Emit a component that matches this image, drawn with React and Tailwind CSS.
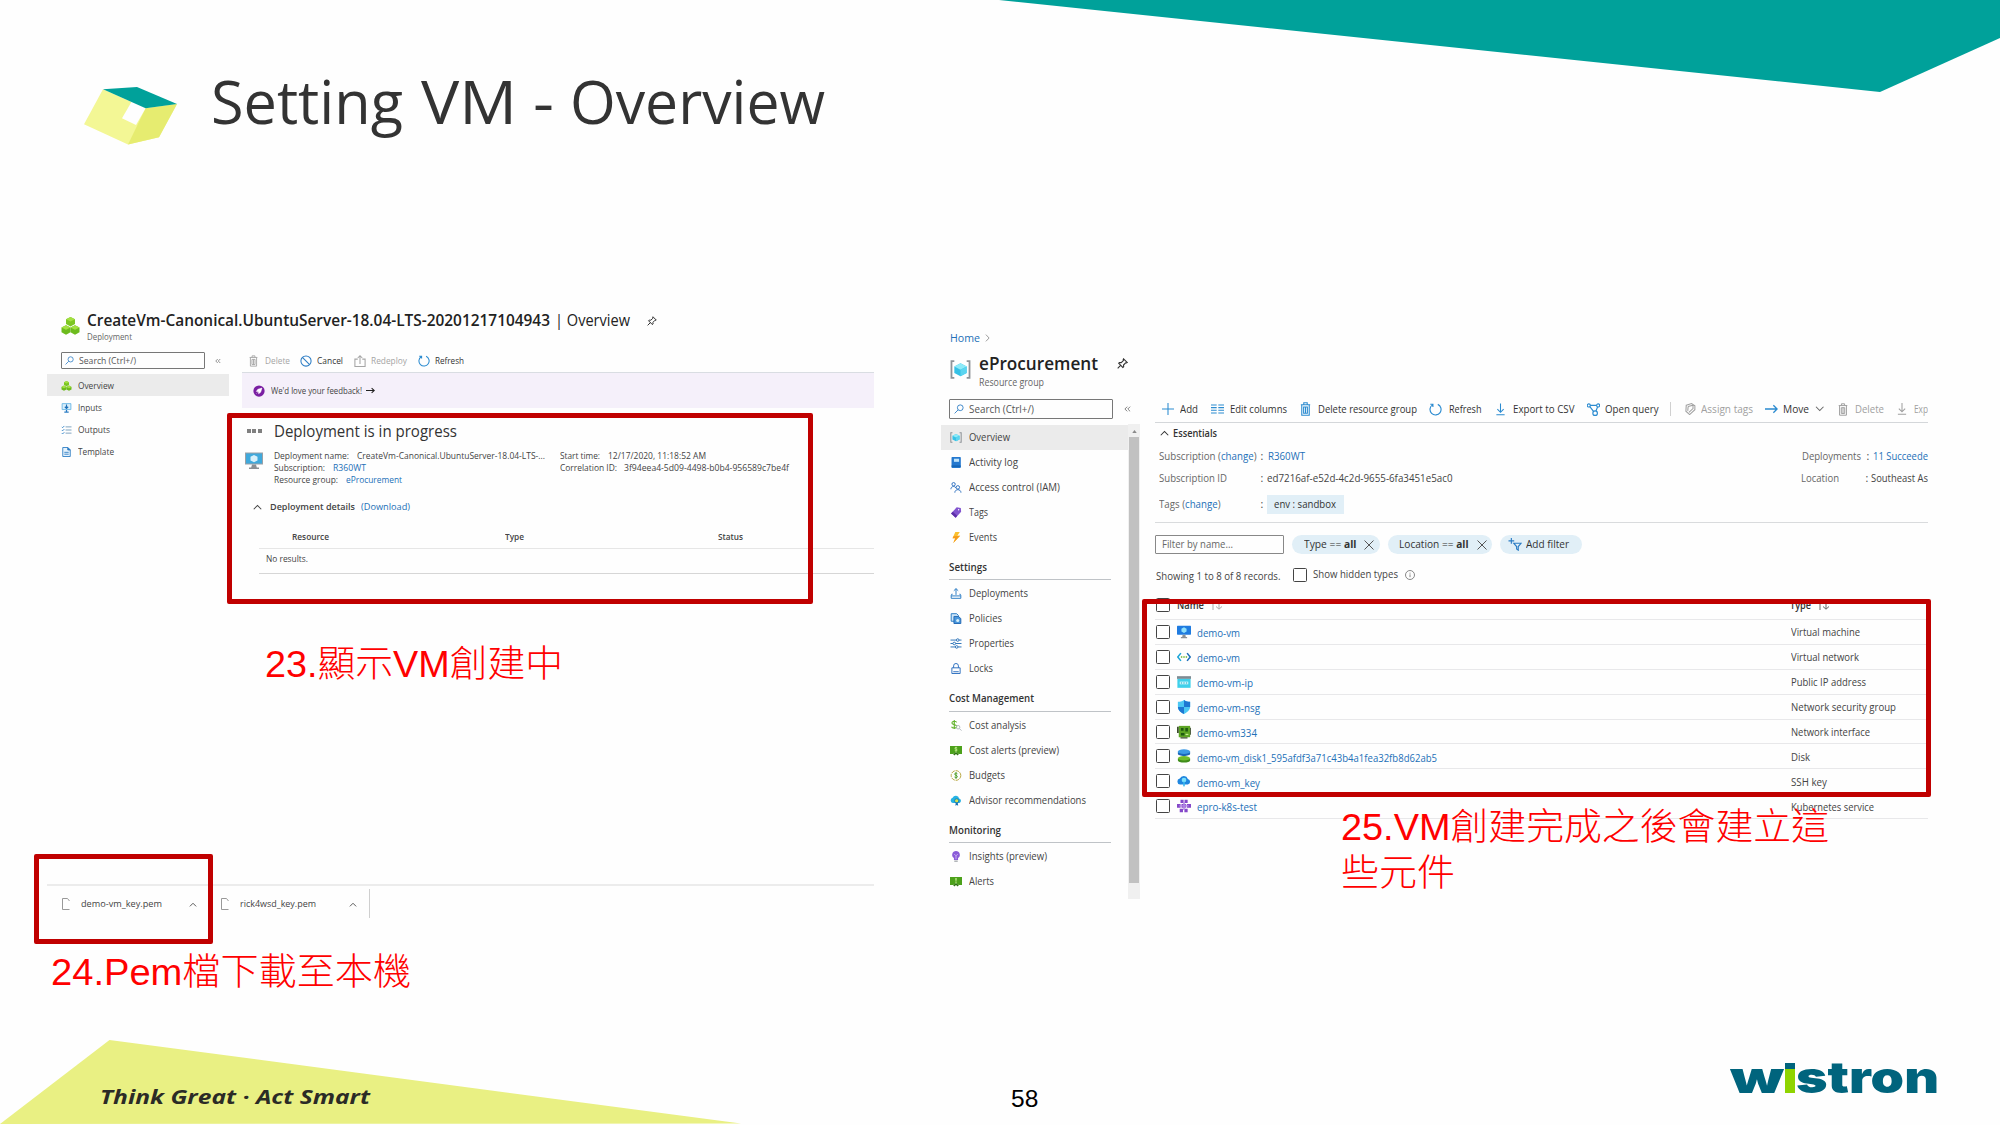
import { useLayoutEffect, useRef } from "react";

/* Text squeezed or stretched horizontally to the width its box is given. */
function Fit({ className = "", children }) {
  const box = useRef(null);
  const inner = useRef(null);
  useLayoutEffect(() => {
    const run = () => {
      if (!box.current || !inner.current) return;
      inner.current.style.transform = "none";
      const w = inner.current.getBoundingClientRect().width;
      const target = box.current.getBoundingClientRect().width;
      if (w > 0) inner.current.style.transform = `scaleX(${target / w})`;
    };
    run();
    document.fonts.ready.then(run);
  }, []);
  return (
    <span ref={box} className={`inline-block shrink-0 whitespace-nowrap ${className}`}>
      <span ref={inner} className="inline-block origin-left">
        {children}
      </span>
    </span>
  );
}

function Svg({ className = "", vb = "0 0 16 16", children }) {
  return (
    <svg viewBox={vb} className={`shrink-0 ${className}`} fill="none" stroke="currentColor" strokeWidth="1.4">
      {children}
    </svg>
  );
}

/* ---------- line icons ---------- */
const Search = ({ className }) => (
  <Svg className={`text-[#2b7cc4] ${className}`}>
    <circle cx="10" cy="6" r="4.6" />
    <path d="M6.6 9.4 1 15" />
  </Svg>
);
const Trash = ({ className }) => (
  <Svg className={className} vb="0 0 14 18">
    <path d="M1 3.5h12M4.8 3.2V1h4.4v2.2M2.2 3.8V17h9.6V3.8" />
    <path d="M4.6 6.5v8h4.8v-8zM7 6.5v8" />
  </Svg>
);
const Cancel = ({ className }) => (
  <Svg className={className}>
    <circle cx="8" cy="8" r="6.8" />
    <path d="M3.2 3.2l9.6 9.6" />
  </Svg>
);
const Redeploy = ({ className }) => (
  <Svg className={className}>
    <path d="M5 5.5H1.2v9.8h13.6V5.5H11M8 12V1M5 4l3-3 3 3" />
  </Svg>
);
const RefreshIcon = ({ className }) => (
  <Svg className={className}>
    <path d="M10.8 1.7a6.8 6.8 0 1 1-6.6.6M1.6 1.6h3.2v3.2" />
  </Svg>
);
const Chevron = ({ className }) => (
  <Svg className={className} vb="0 0 12 8">
    <path d="M1 7l5-5 5 5" />
  </Svg>
);
const Pin = ({ className }) => (
  <Svg className={className}>
    <path d="M9.5 1.2l5.3 5.3-1.3.7-1-.2-3 3.2.2 2.6-1.2.9-6-6 1-1.2 2.6.2 3.2-3-.3-1.2zM5.5 10.5L1 15" strokeWidth="1.6" />
  </Svg>
);
const Download = ({ className }) => (
  <Svg className={className} vb="0 0 12 16">
    <path d="M6 0v11.5M1.8 7.6L6 11.8l4.2-4.2M.5 15h11" />
  </Svg>
);
const Laquo = ({ className }) => (
  <Svg className={`text-[#666] ${className}`} vb="0 0 12 10">
    <path d="M5.5 1l-4 4 4 4M10.5 1l-4 4 4 4" />
  </Svg>
);

/* ---------- coloured icons ---------- */
const Cubes = ({ className }) => (
  <Svg className={className} vb="0 0 20 20">
    <g stroke="none">
      <path d="M10 0l5 2.6v5.2L10 10.500 5 7.800V2.600z" fill="#7cc623" />
      <path d="M5 9.200l5 2.600V17l-5 2.700L0 17v-5.200z" fill="#6dbb1d" />
      <path d="M15 9.200l5 2.600V17l-5 2.700L10 17v-5.200z" fill="#6dbb1d" />
      <path d="M10 0l5 2.600-5 2.500-5-2.500zM5 9.200l5 2.600-5 2.500-5-2.500zM15 9.200l5 2.600-5 2.500-5-2.500z" fill="#a4e043" />
    </g>
  </Svg>
);
const Monitor = ({ className }) => (
  <Svg className={className} vb="0 0 18 17">
    <g stroke="none">
      <path d="M0 0h18v12H0z" fill="#9aa0a6" />
      <path d="M1 1h16v10H1z" fill="#3fa9dc" />
      <path d="M9 2.500l3.500 1.800v3.600L9 9.800 5.500 7.900V4.300z" fill="#d8f0fa" />
      <path d="M7 12h4l.8 3H14v1.600H4V15h2.200z" fill="#8a8f94" />
    </g>
  </Svg>
);
const VmIcon = ({ className }) => (
  <Svg className={className} vb="0 0 18 16">
    <g stroke="none">
      <rect width="18" height="11.500" rx=".8" fill="#1f7be0" />
      <path d="M9 2l3.300 1.800v3.700L9 9.400 5.700 7.500V3.800z" fill="#8fe0fb" />
      <path d="M7.200 11.500h3.600l.5 3H13V16H5v-1.500h1.700z" fill="#8b9096" />
    </g>
  </Svg>
);
const InputsIcon = ({ className }) => (
  <Svg className={className}>
    <path d="M1 1h14v9.500H1z" stroke="#66b5e4" fill="#d9eefa" />
    <path d="M8 2.500v6M5.300 6L8 8.700 10.700 6" stroke="#1b6fb8" strokeWidth="1.800" />
    <path d="M4.500 14.500h7M8 11v3" stroke="#2b7cc4" strokeWidth="2" />
  </Svg>
);
const OutputsIcon = ({ className }) => (
  <Svg className={className}>
    <path d="M6.500 3H16M6.500 8H16M6.500 13H16" stroke="#6f98b8" />
    <path d="M.5 3l1.300 1.300L4.500 1.500M.5 8l1.300 1.300L4.500 6.500M.5 13l1.300 1.300 2.700-2.800" stroke="#2f82c8" />
  </Svg>
);
const TemplateIcon = ({ className }) => (
  <Svg className={className}>
    <path d="M2 .8h8l4 4v10.400H2z" stroke="#2b7cc4" fill="#e7f3fc" />
    <path d="M10 .8v4h4z" fill="#2b7cc4" stroke="#2b7cc4" />
    <path d="M4.500 8.500h7M4.500 11.500h7" stroke="#2b7cc4" />
  </Svg>
);
const GroupIcon = ({ className }) => (
  <Svg className={className} vb="0 0 22 20">
    <path d="M4.500 1.200H1.500v17.600h3M17.500 1.200h3v17.600h-3" stroke="#8f9499" strokeWidth="1.900" />
    <g stroke="none">
      <path d="M11 3.500l6.500 3.300v6.800L11 17l-6.500-3.400V6.800z" fill="#35c1e6" />
      <path d="M11 3.500l6.500 3.300L11 10.200 4.500 6.800z" fill="#8deaf8" />
      <path d="M11 10.200l6.500-3.400v6.800L11 17z" fill="#5bd5f0" />
    </g>
  </Svg>
);
const LogIcon = ({ className }) => (
  <Svg className={className}>
    <g stroke="none">
      <rect x="1.500" width="13.500" height="16" rx="1" fill="#2478cf" />
      <rect x="5" y="2.500" width="7.500" height="4.500" fill="#bfe3fa" />
      <path d="M1.500 12.500H15V14H1.500z" fill="#0e5ba6" />
    </g>
  </Svg>
);
const IamIcon = ({ className }) => (
  <Svg className={`text-[#2d6fc0] ${className}`}>
    <circle cx="4.500" cy="3.200" r="2.400" />
    <path d="M.6 10.500c0-5 6.500-5 7.200-1.500" />
    <circle cx="10.700" cy="7.800" r="2.500" />
    <path d="M6.300 15.500c0-5.800 8.900-5.800 8.900 0" />
  </Svg>
);
const TagIcon = ({ className }) => (
  <Svg className={className}>
    <path d="M9 .5l6 1 .5 5.500-8 8.500L.8 9.500z" fill="#8254cf" stroke="none" />
    <path d="M.8 9.500l6.700 6 2.200-2.900-6.400-5.600z" fill="#5d2fa8" stroke="none" />
    <circle cx="11.800" cy="4" r="1" fill="#fff" stroke="none" />
  </Svg>
);
const EventsIcon = ({ className }) => (
  <Svg className={className}>
    <path d="M7 0h6.500L10 5.500h4L4 16l3-7H3z" fill="#fbc02d" stroke="none" />
    <path d="M4 16l3-7H3l1.300-3L14 5.500z" fill="#f59b1c" stroke="none" />
  </Svg>
);
const DeployIcon = ({ className }) => (
  <Svg className={`text-[#2b7cc4] ${className}`}>
    <path d="M3 9H1.800L1 11v4h14v-4l-.8-2H13M1 11.500h14M8 10V1M4.800 4L8 .9 11.200 4" />
  </Svg>
);
const PolicyIcon = ({ className }) => (
  <Svg className={className}>
    <path d="M1 1h8l2.500 2.500V12H1z" stroke="#2b7cc4" fill="#cfe6f8" />
    <path d="M5 5h6.500L15 8v7.300H5z" fill="#4a97dc" stroke="#2168b4" />
    <circle cx="10.500" cy="11" r="2.200" fill="#d8f0fa" stroke="none" />
  </Svg>
);
const PropsIcon = ({ className }) => (
  <Svg className={`text-[#2d74b8] ${className}`}>
    <path d="M0 3h8.500M12.500 3H16M0 8h3.500M7.500 8H16M0 13h7M11 13h5" />
    <circle cx="10.500" cy="3" r="1.900" />
    <circle cx="5.500" cy="8" r="1.900" />
    <circle cx="9" cy="13" r="1.900" />
  </Svg>
);
const LockIcon = ({ className }) => (
  <Svg className={`text-[#2d6fc0] ${className}`}>
    <path d="M2 7h12v8.300H2zM4.500 7V4.200a3.500 3.500 0 0 1 7 0V7M4 12.700h8" />
  </Svg>
);
const Bill = ({ className }) => (
  <Svg className={className} vb="0 0 17 14">
    <path d="M0 .5h17V12h-4.500L8.500 9.500 4.500 12H0z" fill="#4ca11b" stroke="none" />
    <path d="M8.500 9.500L4.500 12 6 14l2.500-2L11 14l1.500-2z" fill="#2f7410" stroke="none" />
    <path d="M10.200 3.300c-1-1.100-3.300-.9-3.300.5s3.300 1 3.300 2.500-2.500 1.500-3.500.5M8.500 1.800v6.800" stroke="#c5ef8f" strokeWidth="1.200" />
  </Svg>
);
const AlertBill = ({ className }) => (
  <Svg className={className} vb="0 0 17 14">
    <path d="M0 .5h17V12h-4.500L8.500 9.500 4.500 12H0z" fill="#4ca11b" stroke="none" />
    <path d="M8.500 9.500L4.500 12 6 14l2.500-2L11 14l1.500-2z" fill="#2f7410" stroke="none" />
    <path d="M8.500 2v4M8.500 7v1.600" stroke="#c5ef8f" strokeWidth="1.800" />
  </Svg>
);
const CostIcon = ({ className }) => (
  <Svg className={className}>
    <path d="M9 3.500C8 1 2 1.300 2 4.400 2 7.500 9 6 9 9.400c0 3.200-6.500 3-7.500.4M5.500 0v13" stroke="#63b32e" strokeWidth="1.600" />
    <circle cx="11" cy="10.500" r="2.600" stroke="#b2b8bd" />
    <path d="M13 12.500l3 3" stroke="#b2b8bd" />
  </Svg>
);
const BudgetIcon = ({ className }) => (
  <Svg className={className}>
    <circle cx="8" cy="8" r="7" stroke="#b6a33a" strokeDasharray="5 1.300" />
    <path d="M10 5.400C9 4 6 4.200 6 6s4 1.600 4 3.700c0 2-3.300 2.100-4.200.5M8 3.300v9.400" stroke="#4b9a22" />
  </Svg>
);
const AdvisorIcon = ({ className }) => (
  <Svg className={className} vb="0 0 17 15">
    <path d="M4 11a3.800 3.800 0 0 1-.3-7.400 5 5 0 0 1 9.300 1A3.400 3.400 0 0 1 13.500 11z" fill="#26b3e4" stroke="none" />
    <circle cx="9.500" cy="8" r="3" fill="#d7e34b" stroke="#1681b8" />
    <path d="M8.200 10.500L7.600 15l2-1.200 2 1.200-.7-4.500z" fill="#1672b5" stroke="none" />
  </Svg>
);
const InsightIcon = ({ className }) => (
  <Svg className={className}>
    <path d="M8 0a5.600 5.600 0 0 1 3 10.300V13H5v-2.700A5.600 5.600 0 0 1 8 0z" fill="#8a5bd8" stroke="none" />
    <path d="M5.500 4.500L8 7l2.500-2.500M8 7v5" stroke="#dccbf7" strokeWidth="1.100" />
    <path d="M5.500 14h5v1.500h-5z" fill="#8b9096" stroke="none" />
  </Svg>
);
const VnetIcon = ({ className }) => (
  <Svg className={className} vb="0 0 18 12">
    <path d="M5 1L1 6l4 5" stroke="#1da6d8" strokeWidth="2" />
    <path d="M13 1l4 5-4 5" stroke="#1f6fb9" strokeWidth="2" />
    <path d="M5 6h1.800M8.100 6h1.800M11.200 6H13" stroke="#6cb52d" strokeWidth="1.900" />
  </Svg>
);
const IpIcon = ({ className }) => (
  <Svg className={className} vb="0 0 18 15">
    <path d="M0 0h18v3.500H0z" fill="#7f8b93" stroke="none" />
    <path d="M.5 3.500h17V15H.5z" fill="#3fd0ea" stroke="none" />
    <path d="M3.500 7h11v3.500h-11z" fill="#c9f5fb" stroke="none" />
    <path d="M5 8.800h1.500M8.200 8.800h1.600M11.500 8.800H13" stroke="#1b9fc0" />
  </Svg>
);
const NsgIcon = ({ className }) => (
  <Svg className={className}>
    <path d="M8 0c2.500 1.700 4.500 2 7 2v5.500C15 12 11 14.700 8 16 5 14.700 1 12 1 7.500V2c2.500 0 4.500-.3 7-2z" fill="#4cc8f4" stroke="none" />
    <path d="M8 0c2.500 1.700 4.500 2 7 2v6H8zM8 8v8C5 14.700 1.200 12 1 8z" fill="#1d78d2" stroke="none" />
  </Svg>
);
const NicIcon = ({ className }) => (
  <Svg className={className}>
    <path d="M2 1h13v13H2z" fill="#5da524" stroke="none" />
    <path d="M0 2h2v7H0zM15 3h1v8h-1zM4 14h8v1.500H4z" fill="#3c4c2c" stroke="none" />
    <path d="M4.500 3.500h3v3h-3zM9.500 3.500h3v4h-3zM4.500 9h4v3h-4z" fill="#1f5a12" stroke="none" />
    <path d="M9.800 10.800h3.200" stroke="#c5ef8f" />
  </Svg>
);
const DiskIcon = ({ className }) => (
  <Svg className={className}>
    <path d="M1 3v2.500c0 3.300 14 3.300 14 0V3z" fill="#1b66b7" stroke="none" />
    <ellipse cx="8" cy="3" rx="7" ry="2.800" fill="#3d9be6" stroke="none" />
    <path d="M1 10.800v2c0 3.600 14 3.600 14 0v-2z" fill="#3f8d1a" stroke="none" />
    <ellipse cx="8" cy="10.600" rx="7" ry="2.500" fill="#72bd2c" stroke="none" />
  </Svg>
);
const KeyIcon = ({ className }) => (
  <Svg className={className} vb="0 0 18 15">
    <path d="M4 12a3.900 3.900 0 0 1-.4-7.700A5.600 5.600 0 0 1 14 4.800 3.700 3.700 0 0 1 14 12z" fill="#1f86df" stroke="none" />
    <circle cx="9" cy="6.300" r="3" fill="#7be0fb" stroke="none" />
    <path d="M8 8.500h2V14l-1 1-1-1z" fill="#35b7ee" stroke="none" />
  </Svg>
);
const K8sIcon = ({ className }) => (
  <Svg className={className} vb="0 0 18 16">
    <g fill="#8548c9" stroke="none">
      <path d="M4.500 0h4v4h-4zM9.700 0h4v4h-4zM0 5.500h4.600v4.600H0zM5.800 5.500h5.600v4.600H5.800zM12.600 5.500H18v4.600h-5.400zM3.500 11.500h4.200V16H3.500zM9.500 11.500h4.200V16H9.500z" />
      <path d="M3 7h12v1.500H3zM8 3h2v10H8z" fill="#b389e6" />
    </g>
  </Svg>
);

function LeftNavItem({ icon: Icon, label, w, active }) {
  return (
    <div className={`flex h-[22px] items-center pt-px pl-[14px] ${active ? "bg-[#ebebeb]" : ""}`}>
      <Icon className="h-[10px] w-[11px]" />
      <Fit className={`ml-[6px] ${w}`}>{label}</Fit>
    </div>
  );
}

function FileIcon({ className = "" }) {
  return (
    <Svg className={`mt-[2px] h-[12px] w-[8px] text-[#999] ${className}`} vb="0 0 8 12">
      <path d="M7.500 11.500H.5V.5h5l2 2.500" strokeWidth="1" />
    </Svg>
  );
}

function Deployment() {
  return (
    <section className="ml-[47px] flex h-[620px] w-[827px] shrink-0 flex-col text-[9.500px] leading-none text-[#444]">
      <div className="flex h-[44px] items-start">
        <Cubes className="mt-[17px] ml-[14px] h-[18px] w-[19px]" />
        <div className="ml-[7px]">
          <div className="mt-[11px] flex h-[19px] items-center text-[15.500px] text-[#222]">
            <Fit className="w-[463px] font-semibold">CreateVm-Canonical.UbuntuServer-18.04-LTS-20201217104943</Fit>
            <Fit className="ml-[5px] w-[75px]">| Overview</Fit>
            <Pin className="ml-[17px] h-[10px] w-[10px] text-[#333]" />
          </div>
          <div className="flex h-[13px] items-center text-[9px] text-[#666]">
            <Fit className="w-[45px]">Deployment</Fit>
          </div>
        </div>
      </div>

      <div className="flex">
        <nav className="w-[182px] shrink-0">
          <div className="mt-[8px] flex h-[17px] items-center">
            <div className="ml-[13.500px] flex h-[17px] w-[144px] items-center rounded-[1px] border border-[#777] pl-[3px]">
              <Search className="h-[9px] w-[9px]" />
              <Fit className="ml-[5px] w-[57px] text-[#555]">Search (Ctrl+/)</Fit>
            </div>
            <Laquo className="ml-[10px] h-[6px] w-[6px]" />
          </div>
          <div className="mt-[5px]">
            <LeftNavItem icon={Cubes} label="Overview" w="w-[36px]" active />
            <LeftNavItem icon={InputsIcon} label="Inputs" w="w-[24px]" />
            <LeftNavItem icon={OutputsIcon} label="Outputs" w="w-[32px]" />
            <LeftNavItem icon={TemplateIcon} label="Template" w="w-[36px]" />
          </div>
        </nav>

        <div className="ml-[13px] w-[632px] shrink-0">
          <div className="flex h-[29px] items-center border-b border-[#d9dde2] pt-[5px] pl-[7px] text-[#333]">
            <Trash className="h-[12px] w-[9px] text-[#a5a5a5]" />
            <Fit className="ml-[7px] w-[25px] text-[#a5a5a5]">Delete</Fit>
            <Cancel className="ml-[10px] h-[12px] w-[12px] text-[#2b7cc4]" />
            <Fit className="ml-[5px] w-[26px]">Cancel</Fit>
            <Redeploy className="ml-[11px] h-[12px] w-[12px] text-[#a5a5a5]" />
            <Fit className="ml-[5px] w-[36px] text-[#a5a5a5]">Redeploy</Fit>
            <RefreshIcon className="ml-[11px] h-[12px] w-[12px] text-[#2b8bd0]" />
            <Fit className="ml-[5px] w-[29px]">Refresh</Fit>
          </div>
          <div className="flex h-[35px] items-center bg-[#f5f0fa] pl-[11px]">
            <Svg className="h-[12px] w-[12px]">
              <circle cx="8" cy="8" r="7.500" fill="#7a1fa2" stroke="none" />
              <path d="M11.800 4.200L6.500 5.800 4.500 8.500l3 0M11.800 4.200L10.200 9.500 7.500 11.500v-3zM6 10l-1.300 1.300" fill="#fff" stroke="#fff" strokeWidth=".8" />
            </Svg>
            <Fit className="ml-[6px] w-[91px]">We'd love your feedback!</Fit>
            <Svg className="ml-[4px] h-[7px] w-[9px] text-[#222]" vb="0 0 12 8">
              <path d="M0 4h11M7.500.8L11 4 7.500 7.200" />
            </Svg>
          </div>

          <div className="mt-[11px] flex h-[24px] items-center">
            <div className="ml-[4.500px] flex w-[15.500px] justify-between">
              <span className="h-[4px] w-[4px] bg-[#808080]" />
              <span className="h-[4px] w-[4px] bg-[#808080]" />
              <span className="h-[4px] w-[4px] bg-[#808080]" />
            </div>
            <Fit className="ml-[12px] w-[183px] text-[16.500px] text-[#333]">Deployment is in progress</Fit>
          </div>

          <div className="mt-[7px] flex h-[36px]">
            <Monitor className="mt-[2px] ml-[3px] h-[18px] w-[18px]" />
            <div className="ml-[11px] w-[286px]">
              <div className="flex h-[11.700px] items-center">
                <Fit className="w-[75px]">Deployment name:</Fit>
                <Fit className="ml-[8px] w-[188px]">CreateVm-Canonical.UbuntuServer-18.04-LTS-...</Fit>
              </div>
              <div className="flex h-[11.700px] items-center">
                <Fit className="w-[51px]">Subscription:</Fit>
                <Fit className="ml-[8px] w-[33px] text-[#2370b8]">R360WT</Fit>
              </div>
              <div className="flex h-[12.400px] items-center">
                <Fit className="w-[64px]">Resource group:</Fit>
                <Fit className="ml-[8px] w-[56px] text-[#2370b8]">eProcurement</Fit>
              </div>
            </div>
            <div>
              <div className="flex h-[11.700px] items-center">
                <Fit className="w-[40px]">Start time:</Fit>
                <Fit className="ml-[8px] w-[98px]">12/17/2020, 11:18:52 AM</Fit>
              </div>
              <div className="flex h-[11.700px] items-center">
                <Fit className="w-[57px]">Correlation ID:</Fit>
                <Fit className="ml-[7px] w-[165px]">3f94eea4-5d09-4498-b0b4-956589c7be4f</Fit>
              </div>
            </div>
          </div>

          <div className="mt-[11px] flex h-[20px] items-center">
            <Chevron className="ml-[11px] h-[6px] w-[9px] text-[#444]" />
            <Fit className="ml-[8px] w-[85px] font-semibold">Deployment details</Fit>
            <Fit className="ml-[5.500px] w-[49px] text-[#2370b8]">(Download)</Fit>
          </div>

          <div className="ml-[17px]">
            <div className="mt-[10px] grid h-[22px] grid-cols-[213px_212.500px_1fr] items-center border-b border-[#e6e6e6] pb-px pl-[33px] font-semibold">
              <Fit className="w-[37px]">Resource</Fit>
              <Fit className="w-[19px]">Type</Fit>
              <Fit className="w-[25px]">Status</Fit>
            </div>
            <div className="flex h-[25px] items-start border-b border-[#d6d6d6] pt-[5px] pl-[7px]">
              <Fit className="w-[42px]">No results.</Fit>
            </div>
          </div>
        </div>
      </div>

      <div className="mt-auto flex h-[36px] items-center border-t-2 border-[#ececec]">
        <FileIcon className="ml-[15px]" />
        <Fit className="mt-[2px] ml-[11px] w-[81px]">demo-vm_key.pem</Fit>
        <Chevron className="mt-[2px] ml-[27px] h-[5px] w-[8px]" />
        <FileIcon className="ml-[24px]" />
        <Fit className="mt-[2px] ml-[11px] w-[76px]">rick4wsd_key.pem</Fit>
        <Chevron className="mt-[2px] ml-[33px] h-[5px] w-[8px]" />
        <span className="ml-[12px] h-[29px] w-px bg-[#cfcfcf]" />
      </div>
    </section>
  );
}

function NavItem({ icon: Icon, label, w, active }) {
  return (
    <div className={`flex h-[25px] items-center pl-[9px] ${active ? "bg-[#ebebeb]" : ""}`}>
      <Icon className="h-[11px] w-[12px]" />
      <Fit className={`ml-[7px] ${w}`}>{label}</Fit>
    </div>
  );
}

function NavHeading({ label, w, h }) {
  return (
    <div className={`mb-px ml-[8px] flex w-[162px] items-center border-b border-[#bfc3c7] pt-[5px] font-semibold text-[#333] ${h}`}>
      <Fit className={w}>{label}</Fit>
    </div>
  );
}

function Check({ className = "" }) {
  return <span className={`h-[14px] w-[14px] shrink-0 rounded-[1.500px] border border-[#444] bg-white ${className}`} />;
}

function Sort({ className = "" }) {
  return (
    <Svg className={`h-[9px] w-[13px] ${className}`} vb="0 0 13 9">
      <path d="M3 9V1M.8 3L3 .8 5.200 3M9 0v8M6 5.500L9 8.200l3-2.700" strokeWidth="1" />
    </Svg>
  );
}

const Cross = ({ className }) => (
  <Svg className={`h-[10px] w-[10px] text-[#555] ${className}`} vb="0 0 10 10">
    <path d="M.5.5l9 9M9.500.5l-9 9" strokeWidth="1" />
  </Svg>
);

const ROWS = [
  { icon: VmIcon, name: "demo-vm", w: "w-[43px]", type: "Virtual machine", tw: "w-[69px]" },
  { icon: VnetIcon, name: "demo-vm", w: "w-[43px]", type: "Virtual network", tw: "w-[68px]" },
  { icon: IpIcon, name: "demo-vm-ip", w: "w-[56px]", type: "Public IP address", tw: "w-[75px]" },
  { icon: NsgIcon, name: "demo-vm-nsg", w: "w-[63px]", type: "Network security group", tw: "w-[105px]" },
  { icon: NicIcon, name: "demo-vm334", w: "w-[60px]", type: "Network interface", tw: "w-[79px]" },
  { icon: DiskIcon, name: "demo-vm_disk1_595afdf3a71c43b4a1fea32fb8d62ab5", w: "w-[240px]", type: "Disk", tw: "w-[19px]" },
  { icon: KeyIcon, name: "demo-vm_key", w: "w-[63px]", type: "SSH key", tw: "w-[36px]" },
  { icon: K8sIcon, name: "epro-k8s-test", w: "w-[60px]", type: "Kubernetes service", tw: "w-[83px]" },
];

function ResourceGroup() {
  const blue = "text-[#2b8bd0]";
  return (
    <section className="ml-[67px] h-[599px] w-[987px] shrink-0 overflow-hidden text-[10.500px] leading-none text-[#444]">
      <div className="mt-[30px] flex h-[16px] items-center pl-[8.500px]">
        <Fit className="w-[30px] text-[#2370b8]">Home</Fit>
        <Svg className="ml-[5px] h-[8px] w-[5px] text-[#999]" vb="0 0 6 10">
          <path d="M1 .8L5 5 1 9.200" strokeWidth="1.200" />
        </Svg>
      </div>
      <div className="flex h-[43px] items-start pt-[5px] pl-[9px]">
        <GroupIcon className="mt-[9px] h-[19px] w-[21px]" />
        <div className="ml-[8px]">
          <div className="flex h-[24px] items-center">
            <Fit className="w-[119px] text-[18.500px] font-semibold text-[#222]">eProcurement</Fit>
            <Pin className="ml-[19px] h-[11px] w-[11px] text-[#333]" />
          </div>
          <div className="flex h-[13px] items-center text-[10px] text-[#666]">
            <Fit className="w-[65px]">Resource group</Fit>
          </div>
        </div>
      </div>

      <div className="flex">
        <nav className="w-[199px] shrink-0">
          <div className="mt-[10px] flex h-[20px] items-center">
            <div className="ml-[8px] flex h-[20px] w-[164px] items-center rounded-[1px] border border-[#777] pl-[4px]">
              <Search className="h-[10px] w-[10px]" />
              <Fit className="ml-[5px] w-[65px] text-[#555]">Search (Ctrl+/)</Fit>
            </div>
            <Laquo className="ml-[11px] h-[6px] w-[7px]" />
          </div>
          <div className="mt-[5px] flex h-[475px]">
            <div className="w-[187px]">
              <div className="pt-[0.600px]">
                <NavItem icon={GroupIcon} label="Overview" w="w-[41px]" active />
                <NavItem icon={LogIcon} label="Activity log" w="w-[49px]" />
                <NavItem icon={IamIcon} label="Access control (IAM)" w="w-[91px]" />
                <NavItem icon={TagIcon} label="Tags" w="w-[19px]" />
                <NavItem icon={EventsIcon} label="Events" w="w-[28px]" />
              </div>
              <NavHeading label="Settings" w="w-[38px]" h="h-[30.500px]" />
              <NavItem icon={DeployIcon} label="Deployments" w="w-[59px]" />
              <NavItem icon={PolicyIcon} label="Policies" w="w-[33px]" />
              <NavItem icon={PropsIcon} label="Properties" w="w-[45px]" />
              <NavItem icon={LockIcon} label="Locks" w="w-[24px]" />
              <NavHeading label="Cost Management" w="w-[85px]" h="h-[30.500px]" />
              <NavItem icon={CostIcon} label="Cost analysis" w="w-[57px]" />
              <NavItem icon={Bill} label="Cost alerts (preview)" w="w-[90px]" />
              <NavItem icon={BudgetIcon} label="Budgets" w="w-[36px]" />
              <NavItem icon={AdvisorIcon} label="Advisor recommendations" w="w-[117px]" />
              <NavHeading label="Monitoring" w="w-[52px]" h="h-[30.500px]" />
              <NavItem icon={InsightIcon} label="Insights (preview)" w="w-[78px]" />
              <NavItem icon={AlertBill} label="Alerts" w="w-[25px]" />
            </div>
            <div className="flex w-[12px] flex-col items-center bg-[#f0f0f0]">
              <Svg className="mt-[6px] h-[3px] w-[5px]" vb="0 0 6 4">
                <path d="M3 0l3 4H0z" fill="#8a8a8a" stroke="none" />
              </Svg>
              <span className="mt-[4px] h-[446px] w-[10px] bg-[#c1c1c1]" />
            </div>
          </div>
        </nav>

        <div className="ml-[15px] w-[773px] shrink-0 overflow-hidden">
          <div className="flex h-[34px] items-center border-b border-[#d4d7da] pt-[7px] pl-[7px] text-[#333]">
            <Svg className={`h-[12px] w-[12px] ${blue}`}>
              <path d="M8 0v16M0 8h16" />
            </Svg>
            <Fit className="ml-[6px] w-[18px]">Add</Fit>
            <Svg className={`ml-[13px] h-[10px] w-[13px] ${blue}`} vb="0 0 16 12">
              <path d="M0 1h7M9 1h7M0 4.300h7M9 4.300h7M0 7.600h7M9 7.600h7M0 11h7M9 11h7" strokeWidth="1.300" />
            </Svg>
            <Fit className="ml-[6px] w-[57px]">Edit columns</Fit>
            <Trash className={`ml-[13px] h-[14px] w-[11px] ${blue}`} />
            <Fit className="ml-[7px] w-[99px]">Delete resource group</Fit>
            <RefreshIcon className={`ml-[12px] h-[13px] w-[13px] ${blue}`} />
            <Fit className="ml-[6.500px] w-[32.500px]">Refresh</Fit>
            <Download className={`ml-[15px] h-[13px] w-[9px] ${blue}`} />
            <Fit className="ml-[7.500px] w-[61.500px]">Export to CSV</Fit>
            <Svg className={`ml-[12.500px] h-[13px] w-[13px] ${blue}`}>
              <circle cx="2.200" cy="3" r="1.900" />
              <circle cx="13.700" cy="3" r="1.900" />
              <circle cx="10" cy="12.500" r="2.800" />
              <path d="M4 3h7.700M13 5l-2 4.800M3.500 4.500L8 10.300" />
            </Svg>
            <Fit className="ml-[5px] w-[53.500px]">Open query</Fit>
            <span className="ml-[12px] h-[14px] w-px shrink-0 bg-[#d0d0d0]" />
            <Svg className="ml-[13px] h-[12px] w-[12px] text-[#a0a0a0]">
              <path d="M3 3l7-2.200 4.500 3V9l-7 6.400-5-4.400zM5.500 4.800L12 3v4.500l-5.500 5M5.500 4.800L5 10.500" />
            </Svg>
            <Fit className="ml-[5px] w-[52px] text-[#a0a0a0]">Assign tags</Fit>
            <Svg className={`ml-[12px] h-[10px] w-[13px] ${blue}`} vb="0 0 14 10">
              <path d="M0 5h13M9 1l4 4-4 4" />
            </Svg>
            <Fit className="ml-[5px] w-[26px]">Move</Fit>
            <Chevron className="ml-[6px] h-[6px] w-[9.500px] rotate-180 text-[#666]" />
            <Trash className="ml-[13px] h-[13px] w-[10px] text-[#a0a0a0]" />
            <Fit className="ml-[7.500px] w-[29px] text-[#a0a0a0]">Delete</Fit>
            <Download className="ml-[13px] h-[12px] w-[10px] text-[#a0a0a0]" />
            <Fit className="ml-[7px] w-[14px] text-[#a0a0a0]">Exp</Fit>
          </div>

          <div className="flex h-[20px] items-center pl-[5px] font-semibold text-[#333]">
            <Chevron className="h-[6px] w-[9px]" />
            <Fit className="ml-[4px] w-[44px]">Essentials</Fit>
          </div>
          <div className="flex h-[26px] items-center pl-[4px]">
            <Fit className="w-[97.500px] text-[#666]">
              Subscription (<span className="text-[#2370b8]">change</span>)
            </Fit>
            <span className="ml-[4px] w-[8px]">:</span>
            <Fit className="w-[37px] text-[#2370b8]">R360WT</Fit>
            <Fit className="ml-[497.500px] w-[59px] text-[#666]">Deployments</Fit>
            <span className="ml-[5px] w-[7px]">:</span>
            <Fit className="w-[55px] text-[#2370b8]">11 Succeede</Fit>
          </div>
          <div className="flex h-[18px] items-center pl-[4px]">
            <Fit className="w-[68px] text-[#666]">Subscription ID</Fit>
            <span className="ml-[33.500px] w-[8px]">:</span>
            <Fit className="w-[185.500px]">ed7216af-e52d-4c2d-9655-6fa3451e5ac0</Fit>
            <Fit className="ml-[349px] w-[38px] text-[#666]">Location</Fit>
            <span className="ml-[26px] w-[7px]">:</span>
            <Fit className="w-[57px]">Southeast As</Fit>
          </div>
          <div className="flex h-[36px] items-center border-b border-[#d9dbdd] pl-[4px]">
            <Fit className="w-[61.500px] text-[#666]">
              Tags (<span className="text-[#2370b8]">change</span>)
            </Fit>
            <span className="ml-[40px] w-[6.500px]">:</span>
            <span className="flex h-[19px] w-[77px] items-center bg-[#e1eff7] pl-[7px] text-[#333]">
              <Fit className="w-[62px]">env : sandbox</Fit>
            </span>
          </div>

          <div className="mt-[12px] flex h-[19px] items-center text-[#333]">
            <span className="flex h-[19px] w-[129px] items-center rounded-[1px] border border-[#888] pl-[6px] text-[#666]">
              <Fit className="w-[71px]">Filter by name...</Fit>
            </span>
            <span className="ml-[7.500px] flex h-[19px] w-[88px] items-center rounded-full bg-[#e1eff7] pl-[12px]">
              <Fit className="w-[52.500px]">
                Type == <b>all</b>
              </Fit>
              <Cross className="ml-[8px]" />
            </span>
            <span className="ml-[8px] flex h-[19px] w-[104.500px] items-center rounded-full bg-[#e1eff7] pl-[11.500px]">
              <Fit className="w-[69.500px]">
                Location == <b>all</b>
              </Fit>
              <Cross className="ml-[8.500px]" />
            </span>
            <span className="ml-[8px] flex h-[19px] w-[82px] items-center rounded-full bg-[#e1eff7] pl-[8px]">
              <Svg className="h-[13px] w-[14px] text-[#2b7cc4]">
                <path d="M3.500 0v7M0 3.500h7M6.500 6.500h9L12 10.500V15l-2-1.500v-3z" />
              </Svg>
              <Fit className="ml-[3.500px] w-[43px]">Add filter</Fit>
            </span>
          </div>

          <div className="flex h-[44px] items-center pl-px">
            <Fit className="w-[124.500px]">Showing 1 to 8 of 8 records.</Fit>
            <Check className="-mt-[2px] ml-[12.500px]" />
            <Fit className="-mt-[3px] ml-[6px] w-[85px]">Show hidden types</Fit>
            <Svg className="-mt-[3px] ml-[7px] h-[10px] w-[10px] text-[#777]">
              <circle cx="8" cy="8" r="7.200" />
              <path d="M8 7v4.500M8 4.300v1.500" />
            </Svg>
          </div>

          <div className="flex h-[22px] items-start border-b border-[#e8e8ea] pl-px font-semibold text-[#333]">
            <Check />
            <Fit className="mt-[2px] ml-[6.500px] w-[27px]">Name</Fit>
            <Sort className="mt-[3px] ml-[6px] text-[#aaa]" />
            <Fit className="mt-[2px] ml-[567px] w-[21px]">Type</Fit>
            <Sort className="mt-[3px] ml-[6px] text-[#666]" />
          </div>
          {ROWS.map((r, i) => (
            <div
              key={i}
              className="grid h-[24.900px] grid-cols-[20.500px_20.500px_593.500px_1fr] items-center border-b border-[#e8e8ea] pl-px"
            >
              <Check />
              <r.icon className="h-[14px] w-[14px]" />
              <Fit className={`mt-[3px] text-[#2370b8] ${r.w}`}>{r.name}</Fit>
              <Fit className={`mt-[1.500px] ${r.tw}`}>{r.type}</Fit>
            </div>
          ))}
        </div>
      </div>
    </section>
  );
}

/* Red frames and captions laid over the two captured screens. */
function Annotations() {
  const frame = "absolute rounded-[2px] border-[5px] border-[#c00000]";
  const note =
    "absolute font-['Liberation_Sans','Noto_Sans_CJK_TC',sans-serif] text-[37px] leading-[46px] font-light text-[#ff0000]";
  return (
    <>
      <div className={`${frame} top-[413px] left-[227px] h-[191px] w-[586px]`} />
      <div className={`${frame} top-[854px] left-[34px] h-[90px] w-[179px]`} />
      <div className={`${frame} top-[599px] left-[1142px] h-[198px] w-[789px]`} />
      <div className={`${note} top-[642px] left-[265px]`}>
        <Fit className="w-[298px]">23.顯示VM創建中</Fit>
      </div>
      <div className={`${note} top-[950px] left-[51px]`}>
        <Fit className="w-[360px]">24.Pem檔下載至本機</Fit>
      </div>
      <div className={`${note} top-[805px] left-[1341px] flex flex-col`}>
        <Fit className="w-[488px]">25.VM創建完成之後會建立這</Fit>
        <Fit className="w-[114px]">些元件</Fit>
      </div>
    </>
  );
}

export default function App() {
  return (
    <div className="relative flex h-[1125px] w-[2000px] flex-col overflow-hidden bg-[#fefefe] font-['Open_Sans','Noto_Sans',sans-serif]">
      <svg viewBox="0 0 2000 1125" className="absolute inset-0 h-full w-full">
        <path d="M999 0H2000V38L1880 92z" fill="#00a19a" />
        <path d="M0 1124L109.500 1040 741 1123.500z" fill="#e9f083" />
      </svg>

      <header className="relative flex h-[300px] shrink-0 items-start pl-[84px]">
        <svg viewBox="84 87 93 58" className="mt-[87px] h-[58px] w-[93px]">
          <path d="M103 89.300L84 124.300 128 144.500 159 137.300 177 104 145.600 108.300z" fill="#f3f795" />
          <path d="M145.600 108.300L177 104 159 137.300 128 144.500z" fill="#e6ec70" />
          <path d="M132 101L145.600 108.300 136 125 122 118.300z" fill="#fefefe" />
          <path d="M103 89.300L137 87 177 104 145.600 108.300z" fill="#00a19a" />
        </svg>
        <h1 className="mt-[61px] ml-[34px] flex text-[60px] leading-[80px] text-[#333]">
          <Fit className="w-[192px]">Setting</Fit>
          <Fit className="ml-[18px] w-[96px]">VM</Fit>
          <Fit className="ml-[16px] w-[21px]">-</Fit>
          <Fit className="ml-[16px] w-[255px]">Overview</Fit>
        </h1>
      </header>

      <main className="relative flex h-[700px] shrink-0 items-start">
        <Deployment />
        <ResourceGroup />
      </main>

      <footer className="relative flex h-[125px] shrink-0 items-start">
        <Fit className="mt-[83px] ml-[100px] w-[270px] text-[19.500px] leading-[28px] font-bold text-[#2b2b26] italic">
          Think Great · Act Smart
        </Fit>
        <span className="mt-[85px] ml-[641px] w-[28px] font-['Liberation_Sans',sans-serif] text-[24.500px] leading-[28px] text-black">
          58
        </span>
        <div className="mt-[47px] ml-[691px] flex font-['Inter',sans-serif] text-[43px] leading-[60px] font-black text-[#00647d]">
          <Fit className="w-[54px]">w</Fit>
          <span className="relative w-[11px]">
            <Fit className="w-[10px] text-transparent">i</Fit>
            <svg viewBox="0 0 10 30" className="absolute top-[16px] left-px h-[30px] w-[10px]">
              <path d="M0 0h10v6H0z" fill="#00647d" />
              <path d="M0 6h10v24H0z" fill="#8fd400" />
            </svg>
          </span>
          <Fit className="ml-px w-[143px]">stron</Fit>
        </div>
      </footer>

      <Annotations />
    </div>
  );
}
